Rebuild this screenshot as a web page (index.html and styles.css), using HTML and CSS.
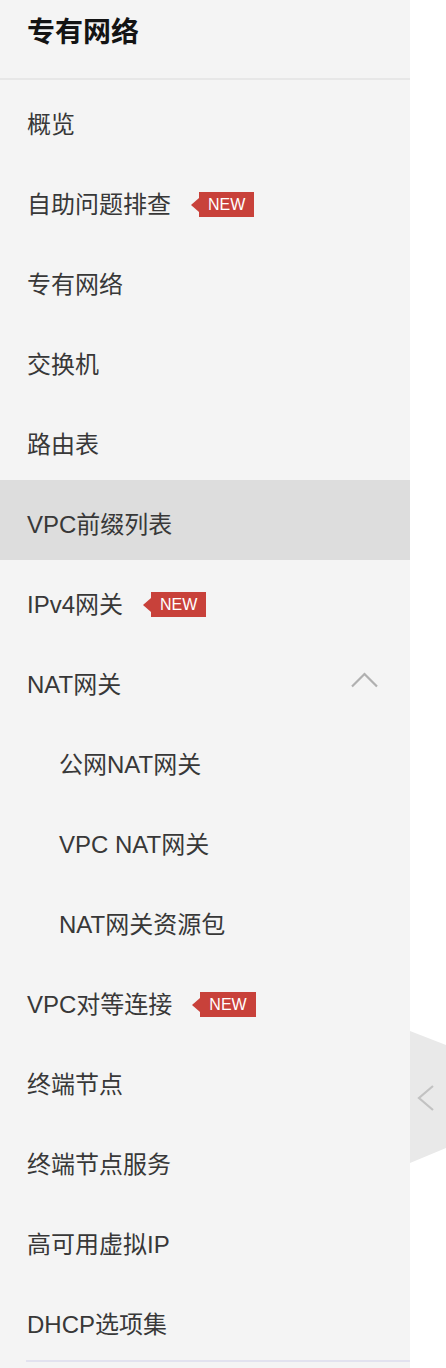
FILE: index.html
```html
<!DOCTYPE html>
<html lang="zh-CN">
<head>
<meta charset="utf-8">
<title>专有网络</title>
<link rel="stylesheet" href="styles.css">
</head>
<body>
<div class="page">
  <aside class="sidebar">
    <div class="sidebar-header"><h1 class="sidebar-title">专有网络</h1></div>
    <ul class="menu">
      <li class="menu-item"><span class="label">概览</span></li>
      <li class="menu-item"><span class="label">自助问题排查</span><span class="badge">NEW</span></li>
      <li class="menu-item"><span class="label">专有网络</span></li>
      <li class="menu-item"><span class="label">交换机</span></li>
      <li class="menu-item"><span class="label">路由表</span></li>
      <li class="menu-item active"><span class="label">VPC前缀列表</span></li>
      <li class="menu-item"><span class="label">IPv4网关</span><span class="badge">NEW</span></li>
      <li class="menu-item group"><span class="label">NAT网关</span>
        <svg class="chevron-up" width="27" height="16" viewBox="0 0 27 16"><polyline points="1,14.5 13.5,2 26,14.5" fill="none" stroke="#b0b0b0" stroke-width="2.2"/></svg>
      </li>
      <li class="menu-item sub"><span class="label">公网NAT网关</span></li>
      <li class="menu-item sub"><span class="label">VPC NAT网关</span></li>
      <li class="menu-item sub"><span class="label">NAT网关资源包</span></li>
      <li class="menu-item"><span class="label">VPC对等连接</span><span class="badge">NEW</span></li>
      <li class="menu-item"><span class="label">终端节点</span></li>
      <li class="menu-item"><span class="label">终端节点服务</span></li>
      <li class="menu-item"><span class="label">高可用虚拟IP</span></li>
      <li class="menu-item"><span class="label">DHCP选项集</span></li>
    </ul>
    <div class="menu-divider"></div>
  </aside>
  <div class="collapse-tab">
    <svg width="36" height="132" viewBox="0 0 36 132">
      <polygon points="0,0 36,14 36,117 0,132" fill="#e9e9e9"/>
      <polyline points="23,55 9,67 23,79" fill="none" stroke="#c2c2c2" stroke-width="2.2"/>
    </svg>
  </div>
</div>
</body>
</html>
```
FILE: styles.css
```css
* { box-sizing: border-box; }
html, body { margin: 0; padding: 0; background: #ffffff; }
body {
  font-family: "Liberation Sans", "Noto Sans CJK SC", sans-serif;
  color: #333333;
}
.page {
  position: relative;
  display: flex;
  min-height: 1368px;
}
.sidebar {
  width: 410px;
  background: #f4f4f4;
  min-height: 1368px;
}
.sidebar-header {
  height: 80px;
  padding: 13px 0 0 27px;
  border-bottom: 2px solid #e7e7e7;
}
.sidebar-title {
  margin: 0;
  font-size: 28px;
  line-height: 40px;
  font-weight: 700;
  color: #141414;
}
.menu {
  list-style: none;
  margin: 0;
  padding: 0;
}
.menu-item {
  height: 80px;
  display: flex;
  align-items: center;
  padding: 9px 32px 0 27px;
  font-size: 24px;
  line-height: 32px;
  color: #383838;
}
.menu-item.active { background: #dddddd; }
.menu-item.sub { padding-left: 59px; }
.menu-item.group { justify-content: space-between; }
.chevron-up { margin-top: -9px; }
.badge {
  position: relative;
  margin-left: 28px;
  height: 25px;
  padding: 0 9px;
  background: #c8413a;
  color: #ffffff;
  font-size: 16px;
  line-height: 25px;
  display: inline-flex;
  align-items: center;
}
.badge::before {
  content: "";
  position: absolute;
  left: -8px;
  top: 50%;
  margin-top: -7px;
  border-top: 7px solid transparent;
  border-bottom: 7px solid transparent;
  border-right: 8px solid #c8413a;
}
.menu-divider {
  margin-left: 26px;
  height: 2px;
  background: #e2e2ef;
}
.collapse-tab {
  position: absolute;
  left: 410px;
  top: 1031px;
  width: 36px;
  height: 132px;
}
.collapse-tab svg { display: block; }
```
